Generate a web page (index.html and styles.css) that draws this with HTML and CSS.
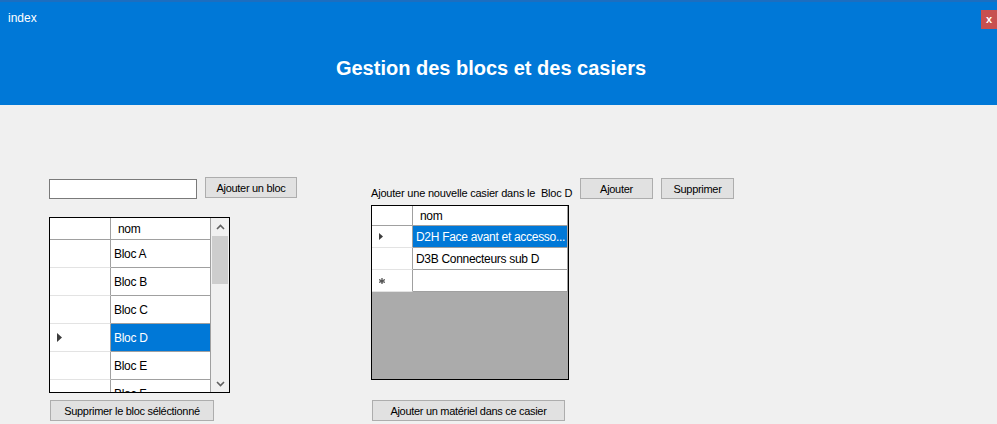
FILE: index.html
```
<!DOCTYPE html>
<html lang="fr">
<head>
<meta charset="utf-8">
<title>index</title>
<link rel="stylesheet" href="styles.css">
</head>
<body>
<header class="titlebar">
  <div class="topline">
    <span class="app-name">index</span>
    <span class="close-btn">x</span>
  </div>
  <h1 class="title">Gestion des blocs et des casiers</h1>
</header>

<main class="content">
  <section class="col-left">
    <div class="toolbar">
      <input class="textbox" type="text">
      <button class="btn btn-add-bloc">Ajouter un bloc</button>
    </div>

    <div class="grid grid-blocs">
      <div class="grid-body">
        <div class="g-row g-head">
          <div class="rh"></div>
          <div class="cell">nom</div>
        </div>
        <div class="g-row"><div class="rh"></div><div class="cell">Bloc A</div></div>
        <div class="g-row"><div class="rh"></div><div class="cell">Bloc B</div></div>
        <div class="g-row"><div class="rh"></div><div class="cell">Bloc C</div></div>
        <div class="g-row selected">
          <div class="rh"><svg class="arrow" width="5" height="9" viewBox="0 0 5 9"><polygon points="0,0 5,4.5 0,9" fill="#3c3c3c"/></svg></div>
          <div class="cell">Bloc D</div>
        </div>
        <div class="g-row"><div class="rh"></div><div class="cell">Bloc E</div></div>
        <div class="g-row"><div class="rh"></div><div class="cell">Bloc F</div></div>
      </div>
      <div class="scrollbar">
        <div class="sb-arrow">
          <svg width="9" height="6" viewBox="0 0 9 6"><polyline points="1,5 4.5,1.5 8,5" fill="none" stroke="#606060" stroke-width="1.6"/></svg>
        </div>
        <div class="sb-track">
          <div class="sb-thumb"></div>
        </div>
        <div class="sb-arrow">
          <svg width="9" height="6" viewBox="0 0 9 6"><polyline points="1,1 4.5,4.5 8,1" fill="none" stroke="#606060" stroke-width="1.6"/></svg>
        </div>
      </div>
    </div>

    <button class="btn btn-del-bloc">Supprimer le bloc séléctionné</button>
  </section>

  <section class="col-right">
    <div class="toolbar toolbar-right">
      <span class="label">Ajouter une nouvelle casier dans le&nbsp; Bloc D</span>
      <button class="btn btn-small">Ajouter</button>
      <button class="btn btn-small">Supprimer</button>
    </div>

    <div class="grid grid-casiers">
      <div class="g-row g-head">
        <div class="rh"></div>
        <div class="cell">nom</div>
      </div>
      <div class="g-row selected">
        <div class="rh"><svg class="arrow" width="4" height="7" viewBox="0 0 4 7"><polygon points="0,0 4,3.5 0,7" fill="#3c3c3c"/></svg></div>
        <div class="cell">D2H Face avant et accesso...</div>
      </div>
      <div class="g-row">
        <div class="rh"></div>
        <div class="cell">D3B Connecteurs sub D</div>
      </div>
      <div class="g-row">
        <div class="rh"><svg class="star" width="6" height="6" viewBox="0 0 6 6"><path d="M3 0v6M0 1.5l6 3M0 4.5l6-3" stroke="#555" stroke-width="1.3"/></svg></div>
        <div class="cell"></div>
      </div>
      <div class="grid-empty"></div>
    </div>

    <button class="btn btn-add-mat">Ajouter un matériel dans ce casier</button>
  </section>
</main>
</body>
</html>
```

FILE: styles.css
```
* { box-sizing: border-box; }

html, body {
  margin: 0;
  padding: 0;
}

body {
  width: 997px;
  height: 424px;
  overflow: hidden;
  background: #f0f0f0;
  font-family: "Liberation Sans", Arial, sans-serif;
  font-size: 11px;
  color: #000;
}

/* ---------- title bar ---------- */
.titlebar {
  height: 105px;
  background: #0078d7;
  border-top: 2px solid #1c6ec0;
  color: #fff;
}

.topline {
  display: flex;
  justify-content: space-between;
  align-items: flex-start;
  padding-top: 8px;
  padding-left: 8px;
}

.app-name {
  font-size: 12px;
  line-height: 17px;
}

.close-btn {
  width: 16px;
  height: 19px;
  flex-shrink: 0;
  background: #c75050;
  color: #fff;
  font-weight: bold;
  font-size: 11px;
  line-height: 18px;
  text-align: center;
}

.title {
  margin: 27px 0 0 0;
  padding-right: 15px;
  font-size: 20px;
  line-height: 24px;
  font-weight: bold;
  text-align: center;
}

/* ---------- content ---------- */
.content {
  display: flex;
  padding-top: 72px;
  padding-left: 49px;
}

.col-left {
  width: 247px;
  display: flex;
  flex-direction: column;
  align-items: flex-start;
}

.col-right {
  margin-left: 75px;
  margin-top: 1px;
  display: flex;
  flex-direction: column;
  align-items: flex-start;
}

.toolbar {
  display: flex;
  align-items: flex-start;
  gap: 8px;
}

.textbox {
  width: 148px;
  height: 20px;
  margin-top: 2px;
  border: 1px solid #7a7a7a;
  background: #fff;
  padding: 0 2px;
  font: inherit;
  outline: none;
}

.btn {
  height: 21px;
  padding: 0;
  background: #e1e1e1;
  border: 1px solid #adadad;
  border-radius: 0;
  font-family: "Liberation Sans", Arial, sans-serif;
  font-size: 11px;
  letter-spacing: -0.3px;
  color: #000;
  text-align: center;
}

.btn-add-bloc { width: 92px; }

.btn-del-bloc {
  width: 164px;
  margin-top: 7px;
  margin-left: 1px;
}

.toolbar-right {
  align-items: flex-end;
  gap: 0;
}

.label {
  line-height: 13px;
  letter-spacing: -0.2px;
  width: 209px;
  white-space: nowrap;
  margin-bottom: -1px;
}

.btn-small {
  width: 73px;
  margin-right: 8px;
}

.btn-add-mat {
  width: 193px;
  margin-top: 20px;
  margin-left: 1px;
}

/* ---------- grids ---------- */
.grid {
  border: 1px solid #000;
  background: #fff;
  font-size: 12px;
  letter-spacing: -0.3px;
}

.grid-blocs {
  margin-top: 18px;
  width: 181px;
  height: 176px;
  display: flex;
  overflow: hidden;
}

.grid-body {
  width: 161px;
  overflow: hidden;
}

.g-row {
  display: flex;
  height: 28px;
}

.g-row .rh {
  width: 61px;
  border-right: 1px solid #a0a0a0;
  border-bottom: 1px solid #e3e3e3;
  display: flex;
  align-items: center;
  padding-left: 7px;
  flex-shrink: 0;
}

.g-row .cell {
  flex: 1;
  border-right: 1px solid #a0a0a0;
  border-bottom: 1px solid #a0a0a0;
  padding-left: 3px;
  display: flex;
  align-items: center;
  white-space: nowrap;
  overflow: hidden;
}

.g-head {
  height: 22px;
}

.g-head .rh {
  border-bottom: 1px solid #a0a0a0;
}

.g-head .cell {
  padding-left: 7px;
  padding-top: 1px;
}

.g-row.selected .cell {
  background: #0078d7;
  color: #fff;
}

/* scrollbar */
.scrollbar {
  width: 18px;
  background: #f0f0f0;
  display: flex;
  flex-direction: column;
  border-left: 1px solid #f0f0f0;
}

.sb-arrow {
  height: 17px;
  display: flex;
  align-items: center;
  justify-content: center;
}

.sb-track {
  flex: 1;
  padding: 1px 1px 0 0;
}

.sb-thumb {
  height: 48px;
  background: #cdcdcd;
}

/* right grid */
.grid-casiers {
  margin-top: 6px;
  width: 198px;
  height: 175px;
  display: flex;
  flex-direction: column;
}

.grid-casiers .g-row {
  height: 22px;
  flex-shrink: 0;
}

.grid-casiers .g-head {
  height: 20px;
}

.grid-casiers .g-row .rh {
  width: 41px;
  padding-left: 7px;
}

.grid-casiers .g-row .cell {
  padding-left: 3px;
}

.grid-casiers .g-head .cell {
  padding-left: 7px;
  padding-top: 1px;
}

.grid-empty {
  flex: 1;
  background: #ababab;
}
```
